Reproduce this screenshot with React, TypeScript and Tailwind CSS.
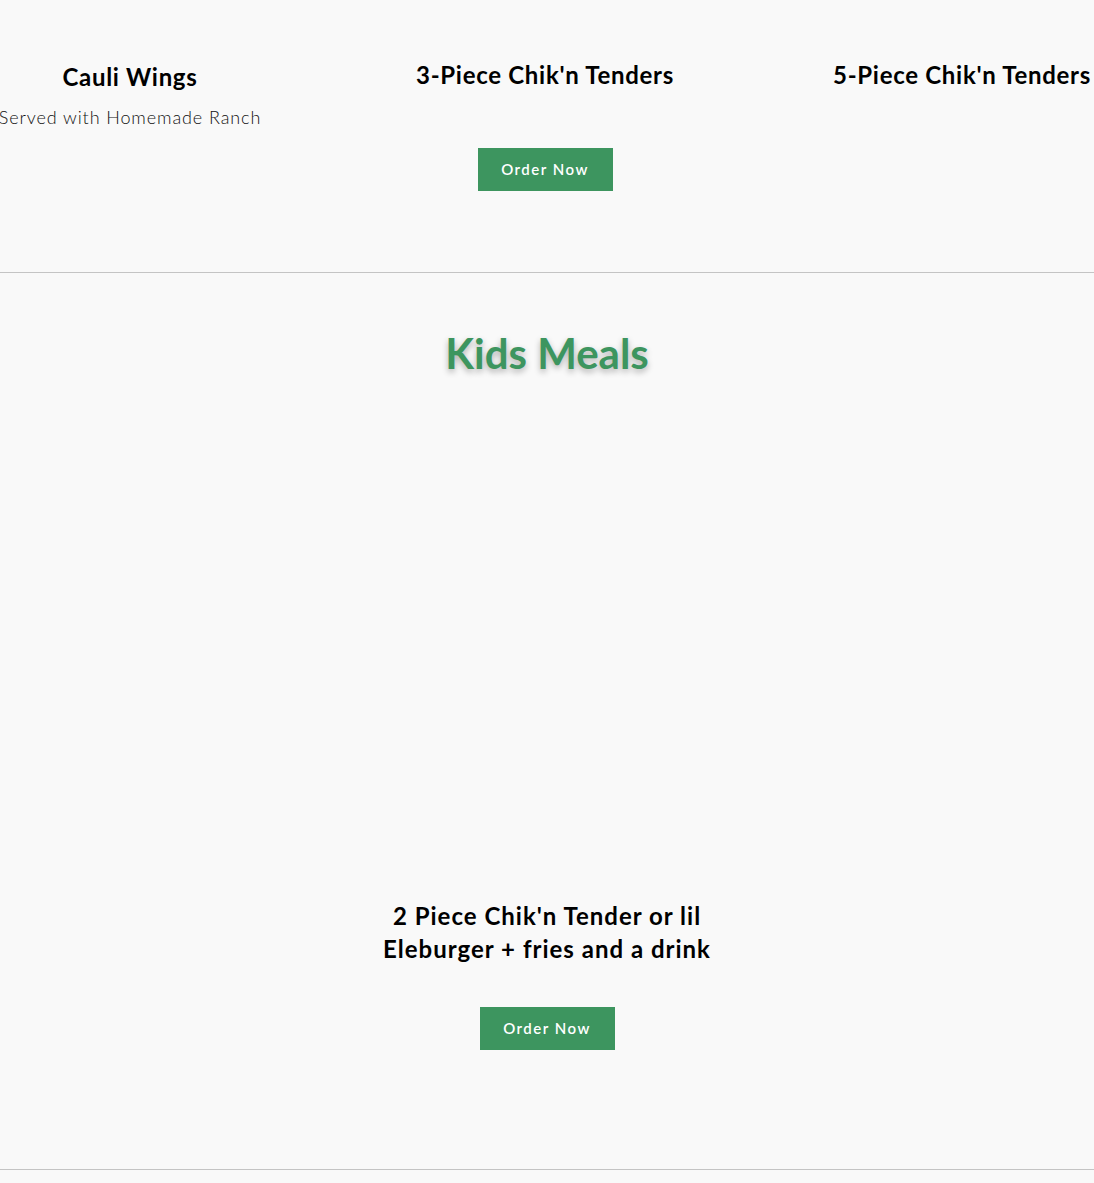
import React from 'react';

const font = { fontFamily: 'Lato, "Noto Sans", sans-serif' };

function OrderButton() {
  return (
    <button className="w-[135px] h-[43px] bg-[#3d955f] text-white text-[15px] font-semibold tracking-[1.5px]">
      Order Now
    </button>
  );
}

export default function App() {
  return (
    <div className="min-h-[1183px] bg-[#f9f9f9] text-black overflow-hidden" style={font}>
      {/* tenders row */}
      <section className="border-b border-[#c4c4c4]">
        <div className="flex gap-[155px] pb-[81px]">
          <div className="w-[260px] shrink-0 flex flex-col items-center">
            <h3 className="mt-[61px] text-[24px] leading-[32px] font-bold tracking-[0.7px]">Cauli Wings</h3>
            <p className="mt-[11px] text-[18px] leading-[27px] font-light tracking-[0.9px] text-[#111] whitespace-nowrap">
              Served with Homemade Ranch
            </p>
          </div>
          <div className="w-[260px] shrink-0 flex flex-col items-center">
            <h3 className="mt-[59px] text-[24px] leading-[32px] font-bold tracking-[0.7px] whitespace-nowrap">3-Piece Chik'n Tenders</h3>
            <div className="mt-[57px]">
              <OrderButton />
            </div>
          </div>
          <div className="w-[260px] shrink-0 ml-[2px] flex flex-col items-center">
            <h3 className="mt-[59px] text-[24px] leading-[32px] font-bold tracking-[0.7px] whitespace-nowrap">5-Piece Chik'n Tenders</h3>
          </div>
        </div>
      </section>

      {/* kids meals */}
      <section className="border-b border-[#c4c4c4] flex flex-col items-center">
        <h2
          className="mt-[56px] text-[42px] leading-[48px] font-bold text-[#3d955f]"
          style={{ textShadow: '0 3px 6px rgba(0,0,0,0.3)' }}
        >
          Kids Meals
        </h2>
        <div className="h-[522px]" />
        <h3 className="text-[24px] leading-[33px] font-bold tracking-[1px] text-center">
          2 Piece Chik'n Tender or lil
          <br />
          Eleburger + fries and a drink
        </h3>
        <div className="mt-[42px] mb-[119px]">
          <OrderButton />
        </div>
      </section>
    </div>
  );
}
